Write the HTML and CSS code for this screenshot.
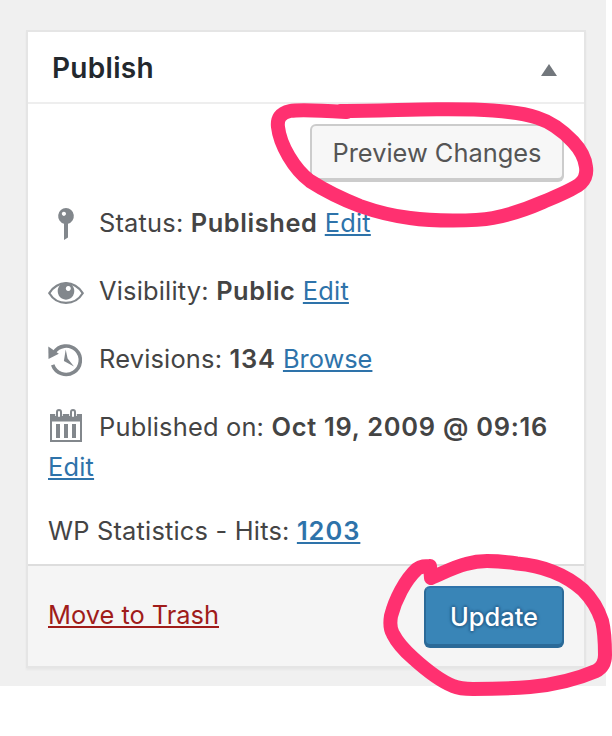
FILE: index.html
```html
<!DOCTYPE html>
<html lang="en">
<head>
<meta charset="utf-8">
<title>Publish</title>
<link rel="stylesheet" href="styles.css">
</head>
<body>
<main class="screen">
  <section class="postbox">
    <header class="postbox-header">
      <h2 class="postbox-title">Publish</h2>
      <svg class="toggle" viewBox="0 0 16 12"><path d="M8 0L16 12H0z"/></svg>
    </header>
    <div class="postbox-body">
      <div class="minor-actions"><button class="button preview">Preview Changes</button></div>
      <div class="row">
        <svg class="icon" viewBox="0 0 36 40"><path fill-rule="evenodd" d="M18 5a8 8 0 0 1 2 15.700V34.500L16 37V20.700A8 8 0 0 1 18 5zM15.900 8.700a2.100 2.100 0 1 0 .01 0z"/></svg>
        <p class="text"><span class="label-status">Status:</span> <b class="value-status">Published</b> <a class="link" href="#">Edit</a></p>
      </div>
      <div class="row">
        <svg class="icon" viewBox="0 0 36 40"><path class="line" d="M1.300 22.200C5 16.500 11 12.200 18 12.200S31 16.500 34.700 22.200C31 28.300 25 31.900 18 31.900S5 28.300 1.300 22.200z"/><path fill-rule="evenodd" d="M18 11.500a8.300 8.600 0 1 1-.01 0zM20.300 14.900a2.500 2.500 0 1 0 .01 0z"/></svg>
        <p class="text"><span class="label-visibility">Visibility:</span> <b class="value-visibility">Public</b> <a class="link" href="#">Edit</a></p>
      </div>
      <div class="row">
        <svg class="icon" viewBox="0 0 36 40"><path class="ring" d="M6 13.800A14.200 14.200 0 1 1 4.700 25.800"/><path d="M.3 7.500L10.800 14.800 .5 20z"/><path d="M17.700 10.500L19.600 19.600 26 27.600 15.900 21.900z"/></svg>
        <p class="text"><span class="label-revisions">Revisions:</span> <b class="value-revisions">134</b> <a class="link browse" href="#">Browse</a></p>
      </div>
      <div class="row">
        <svg class="icon" viewBox="0 0 36 40"><path fill-rule="evenodd" d="M2 7h32v28H2zM4 14.500v18.500h28V14.500z"/><path d="M8 17h4v14H8zM16 17h4v14h-4zM24 17h4v14h-4z"/><path class="halo" d="M11 9V7M25 9V7"/><path class="loop" d="M9 9V5a2 2 0 0 1 4 0v4a2 2 0 0 1-4 0zM23 9V5a2 2 0 0 1 4 0v4a2 2 0 0 1-4 0z"/></svg>
        <p class="text"><span class="label-date">Published on:</span> <b class="value-date">Oct 19, 2009 @ 09:16</b></p>
      </div>
      <p class="text edit-date"><a class="link" href="#">Edit</a></p>
      <p class="text stats"><span class="label-stats">WP Statistics - Hits:</span> <b><a class="link value-stats" href="#">1203</a></b></p>
    </div>
    <footer class="actions">
      <a class="link trash" href="#">Move to Trash</a>
      <button class="button update">Update</button>
    </footer>
  </section>
  <svg class="marks" viewBox="0 0 612 736">
    <path d="M347 112C331 111 300 109 290 111C280 113 277 119 278 127C280 145 294 169 310 181C324 190 342 199 360 206C377 212 393 216 410 218C424 220 439 220.500 453 220.500C467 220.500 480 220.500 493 218C511 214.500 527 209 543 202C557 196 575 189 581 183C585 179 587 174 586 167C585 158 580 149 573 141.600C563 131 551 122 537 117.600C523 113 508 111.500 493 110.500C474 109 456 109.300 437 109.300C407 109.500 377 111 340 111"/>
    <path d="M430 566C425 566 421 566 417 569C405 580 395 600 391 616C390 622 390 629 393 634C397 642 405 651 413 658C424 668 438 680 453 686C460 689 466 689 473 689C492 689 511 688.500 530 687C552 685 575 680 596 671C602 668 605 662 605 655C605 644 605 633 602 621C598 609 591 598 583 590C574 582 564 576 553 571.700C541 567 529 564.500 517 563.500C507 562 497 561 487 561C479 561 473 562 466 564C454 567 443 573 431 578L430 566"/>
  </svg>
</main>
</body>
</html>
```
FILE: styles.css
```css
* { box-sizing: border-box; }
body { margin: 0; min-height: 736px; background: #fff; color: #444; font-family: Inter, "Liberation Sans", sans-serif; font-size: 25.4px; line-height: 40px; letter-spacing: .2px; }
h2, p { margin: 0; }
b { font-weight: 600; letter-spacing: .58px; }
.value-date, .value-revisions { letter-spacing: .74px; }
.value-stats { letter-spacing: 1px; }
.screen { position: relative; width: 606px; height: 686px; padding: 30px 0 0 26px; background: #f0f0f0; }
.postbox { width: 560px; height: 638px; border: 2px solid #e5e5e5; background: #fff; box-shadow: 0 2px 2px rgba(0,0,0,.04); display: flex; flex-direction: column; }
.postbox-header { height: 72px; padding: 2px 27px 0 24px; border-bottom: 2px solid #eee; display: flex; align-items: center; justify-content: space-between; }
.postbox-title { font-size: 28px; font-weight: 600; color: #23282d; letter-spacing: .3px; }
.toggle { width: 16px; height: 12px; margin-top: 3px; fill: #72777c; }
.postbox-body { height: 460px; padding: 20px 20px 0; }
.minor-actions { display: flex; justify-content: flex-end; height: 79px; }
.button { font: inherit; letter-spacing: 0; border-radius: 6px; padding: 2px 0 0; white-space: nowrap; }
.preview { width: 254px; height: 56px; color: #555; background: #f7f7f7; border: 2px solid #ccc; box-shadow: 0 2px 0 #ccc; }
.row { display: flex; gap: 15px; height: 40px; margin-bottom: 28px; }
.row:nth-of-type(5) { margin-bottom: 0; }
.icon { flex: none; width: 36px; height: 40px; fill: #82878c; }
.line { fill: none; stroke: #82878c; stroke-width: 2.2; }
.ring { fill: none; stroke: #82878c; stroke-width: 3.6; }
.halo { stroke: #fff; stroke-width: 7.6; }
.loop { fill: #fff; stroke: #82878c; stroke-width: 2; }
.text { white-space: nowrap; }
.stats { margin-top: 24px; }
.link { color: #2e73aa; text-decoration: underline; text-decoration-thickness: 2px; text-underline-offset: 2px; text-decoration-skip-ink: none; }
.browse { letter-spacing: 0; }
.actions { height: 102px; padding: 0 20px 2px; background: #f5f5f5; border-top: 2px solid #ddd; display: flex; align-items: center; justify-content: space-between; }
.trash { color: #a01c1a; letter-spacing: 0; }
.update { position: relative; top: 1px; width: 140px; height: 60px; color: #fff; font-weight: 500; background: #3985b7; border: 2px solid #2b6a98; border-top-color: #2e73aa; box-shadow: 0 2px 0 #2b6a98; text-shadow: 0 -2px 2px #2b6a98, 2px 0 2px #2b6a98, 0 2px 2px #2b6a98, -2px 0 2px #2b6a98; }
.marks { position: absolute; left: 0; top: 0; width: 612px; height: 736px; fill: none; stroke: #ff3070; stroke-width: 14; stroke-linecap: round; stroke-linejoin: round; pointer-events: none; }
```
